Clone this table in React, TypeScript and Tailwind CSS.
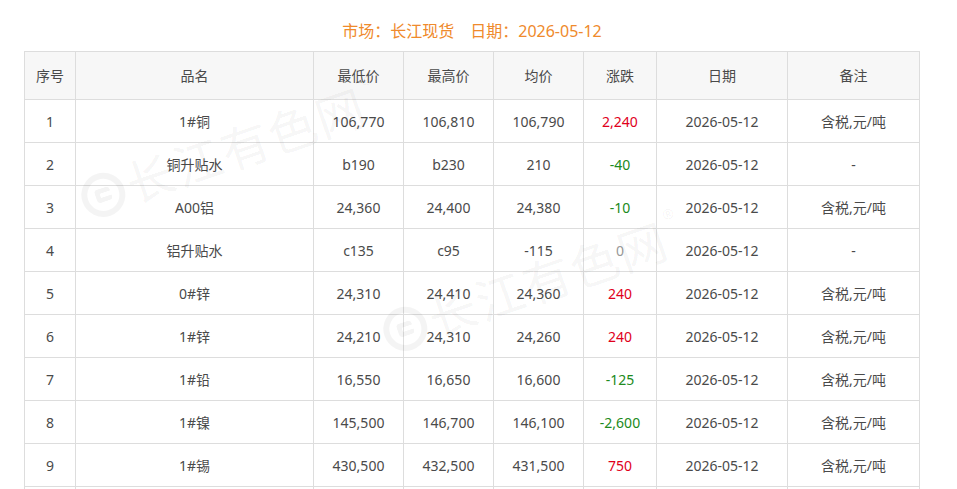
const rows = [
  ["1", "1#铜", "106,770", "106,810", "106,790", "2,240", "2026-05-12", "含税,元/吨"],
  ["2", "铜升贴水", "b190", "b230", "210", "-40", "2026-05-12", "-"],
  ["3", "A00铝", "24,360", "24,400", "24,380", "-10", "2026-05-12", "含税,元/吨"],
  ["4", "铝升贴水", "c135", "c95", "-115", "0", "2026-05-12", "-"],
  ["5", "0#锌", "24,310", "24,410", "24,360", "240", "2026-05-12", "含税,元/吨"],
  ["6", "1#锌", "24,210", "24,310", "24,260", "240", "2026-05-12", "含税,元/吨"],
  ["7", "1#铅", "16,550", "16,650", "16,600", "-125", "2026-05-12", "含税,元/吨"],
  ["8", "1#镍", "145,500", "146,700", "146,100", "-2,600", "2026-05-12", "含税,元/吨"],
  ["9", "1#锡", "430,500", "432,500", "431,500", "750", "2026-05-12", "含税,元/吨"],
  ["10", "1#锑", "159,000", "162,000", "160,500", "0", "2026-05-12", "含税,元/吨"],
];

const headers = ["序号", "品名", "最低价", "最高价", "均价", "涨跌", "日期", "备注"];
const widths = ["w-[51px]", "w-[238px]", "w-[90px]", "w-[90px]", "w-[90px]", "w-[73px]", "w-[131px]", "w-[132px]"];

const changeColor = (v: string) => {
  if (v === "0") return "text-[#999999]";
  if (v.startsWith("-")) return "text-[#208a20]";
  return "text-[#e0001b]";
};

// faint site watermark laid over the table
const Watermark = ({ className }: { className: string }) => (
  <div className={`pointer-events-none absolute flex items-center gap-1 -rotate-[19deg] text-[rgba(0,0,0,0.05)] ${className}`}>
    <div className="flex h-[44px] w-[44px] items-center justify-center rounded-full border-[6px] border-[rgba(0,0,0,0.045)]">
      <div className="h-[14px] w-[16px] rounded-sm border-[5px] border-r-0 border-[rgba(0,0,0,0.045)]" />
    </div>
    <span className="text-[48px] font-normal leading-none tracking-[2px]">长江有色网</span>
    <span className="-mt-[48px] text-[14px]">®</span>
  </div>
);

export default function App() {
  return (
    <div
      className="w-[957px] bg-white"
      style={{ fontFamily: '"Noto Sans", "Noto Sans CJK SC", sans-serif' }}
    >
      <div className="ml-[24px] w-[896px]">
        <div className="flex h-[51px] items-center justify-center pt-[10px] text-[16px] text-[#ef8a2c]">
          <span>市场：长江现货</span>
          <span className="ml-[16px]">日期：2026-05-12</span>
        </div>
        <div className="relative overflow-hidden">
          <table className="w-full table-fixed border-collapse text-[14px] text-[#4a4a4a]">
            <thead>
              <tr className="h-[48px] bg-[#f7f7f7]">
                {headers.map((h, i) => (
                  <th key={h} className={`${widths[i]} border border-[#dddddd] text-center font-normal`}>
                    {h}
                  </th>
                ))}
              </tr>
            </thead>
            <tbody>
              {rows.map((r) => (
                <tr key={r[0]} className="h-[43px]">
                  {r.map((c, i) => (
                    <td
                      key={i}
                      className={`border border-[#dddddd] text-center ${i === 5 ? changeColor(c) : ""}`}
                    >
                      {c}
                    </td>
                  ))}
                </tr>
              ))}
            </tbody>
          </table>
          <Watermark className="left-[50px] top-[76px]" />
          <Watermark className="left-[352px] top-[210px]" />
        </div>
      </div>
    </div>
  );
}
